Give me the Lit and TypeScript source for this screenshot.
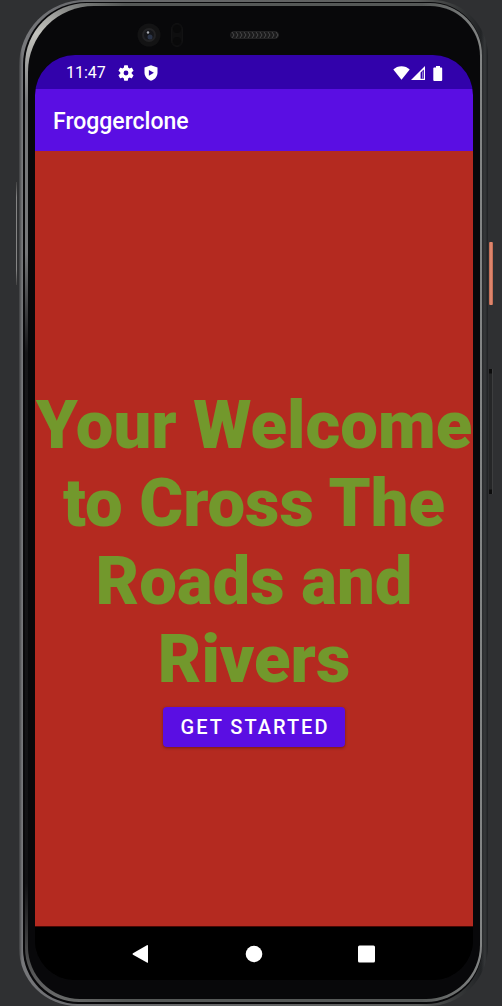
import { LitElement, html, css, svg } from "lit";
import { customElement } from "lit/decorators.js";

@customElement("status-bar")
class StatusBar extends LitElement {
  static styles = css`
    :host {
      display: flex;
      align-items: center;
      height: 34px;
      padding: 2px 30px 0 31px;
      box-sizing: border-box;
      background: #3202ab;
      color: #fff;
      font: 400 16px/20px Roboto, sans-serif;
    }
    .time { margin-right: 12px; }
    .gear { width: 16px; height: 16px; margin-right: 9px; }
    .shield { width: 16px; height: 16px; }
    .radios { display: flex; align-items: center; margin-left: auto; }
    .wifi { width: 17px; height: 14px; margin-right: 1px; }
    .cell { width: 15px; height: 14px; margin-right: 7px; }
    .battery { width: 10px; height: 15px; }
    svg { display: block; }
  `;

  render() {
    return html`
      <span class="time">11:47</span>
      <svg class="gear" viewBox="1 2 20 20" fill="#fff">
        <path d="M19.14 12.94c.04-.3.06-.61.06-.94s-.02-.64-.07-.94l2.03-1.58a.49.49 0 0 0 .12-.61l-1.92-3.32a.49.49 0 0 0-.59-.22l-2.39.96a7 7 0 0 0-1.62-.94l-.36-2.54a.48.48 0 0 0-.48-.41h-3.84a.48.48 0 0 0-.47.41l-.36 2.54a7.4 7.4 0 0 0-1.62.94l-2.39-.96a.48.48 0 0 0-.59.22L2.74 8.87a.47.47 0 0 0 .12.61l2.03 1.58a6 6 0 0 0-.02 1.88l-2.03 1.58a.49.49 0 0 0-.12.61l1.92 3.32c.12.22.37.29.59.22l2.39-.96c.5.38 1.03.7 1.62.94l.36 2.54c.05.24.24.41.48.41h3.84c.24 0 .44-.17.47-.41l.36-2.54a7 7 0 0 0 1.62-.94l2.39.96c.22.08.47 0 .59-.22l1.92-3.32a.47.47 0 0 0-.12-.61zM12 15a3 3 0 1 1 0-6 3 3 0 0 1 0 6z" transform="translate(-1 0)"/>
      </svg>
      <svg class="shield" viewBox="0 0 16 16">
        <path d="M8 .2 14.500 2.600V7.500c0 4-2.700 7-6.500 8.300C4.200 14.500 1.500 11.500 1.500 7.500V2.600z" fill="#fff"/>
        <path d="M5.900 4.900v5.800L10.900 7.800z" fill="#3202ab"/>
      </svg>
      <span class="radios">
        <svg class="wifi" viewBox="0 0 17 14"><path d="M8.500 13.800.300 3.600C2.500 1.500 5.300.300 8.500.300s6 1.200 8.200 3.300z" fill="#fff"/></svg>
        <svg class="cell" viewBox="0 0 15 14">
          <path d="M14 0v14H0z" fill="#fff"/>
          <path d="M12.800 3.600V12.800H9.600V6.600z" fill="#3202ab"/>
          <path d="M11 5.500h1V12.800h-1z" fill="#8f78d4"/>
        </svg>
        <svg class="battery" viewBox="0 0 10 15"><path d="M3 0h4v1.500h1.300q.9 0 .9.900v11.700q0 .9-.9.900H1.200q-.9 0-.9-.9V2.400q0-.9.900-.9H3z" fill="#fff"/></svg>
      </span>
    `;
  }
}

@customElement("navigation-bar")
class NavigationBar extends LitElement {
  static styles = css`
    :host {
      display: flex;
      align-items: center;
      justify-content: center;
      gap: 73px;
      height: 54px;
      background: #000;
      border-top: 1px solid #470804;
      box-sizing: border-box;
    }
    .key { width: 40px; height: 40px; padding: 0; border: 0; background: none; display: grid; place-items: center; }
    svg { display: block; width: 20px; height: 20px; fill: #fff; }
  `;

  render() {
    return html`
      <button class="key" aria-label="Back">
        <svg viewBox="0 0 20 20"><path d="M17 1.900v16q0 1.300-1.100.700L2 10.700q-1.100-.700 0-1.400L15.900 1.200q1.100-.600 1.100.700z"/></svg>
      </button>
      <button class="key" aria-label="Home">
        <svg viewBox="0 0 20 20"><circle cx="10" cy="10" r="8.300"/></svg>
      </button>
      <button class="key" aria-label="Recent apps">
        <svg viewBox="0 0 20 20"><rect x="1" y="1.500" width="17" height="17" rx="1.500"/></svg>
      </button>
    `;
  }
}

@customElement("app-root")
class AppRoot extends LitElement {
  static styles = css`
    :host {
      display: block;
      min-height: 100vh;
      background: #2f3032;
      font-family: Roboto, sans-serif;
    }
    .stage { padding: 0 14px 0 19px; }
    .rim, .groove, .bevel, .glass, .screen { display: flex; flex-direction: column; box-sizing: border-box; }
    .rim {
      position: relative;
      min-height: 100vh;
      padding: 2px 6px 2px 4px;
      border-radius: 66px 56px 60px 58px;
      background: linear-gradient(90deg, #3c3d3f 0, #77787b 3px, #6c6d70 40px, #5a5c5b calc(100% - 70px), #222426 calc(100% - 7px), #36383a calc(100% - 3px), #1e2022 100%);
    }
    .groove {
      flex: 1;
      padding: 1px 0 2px 2px;
      border-radius: 63px 52px 56px 55px;
      background: #08080a;
    }
    .bevel {
      flex: 1;
      padding: 3px 2px 3px 3px;
      border-radius: 62px 52px 56px 54px;
      background:
        linear-gradient(90deg, transparent 0, transparent 25px, #555857 100px, #555857 calc(100% - 60px), #838585 100%),
        linear-gradient(180deg, #8d8e8c 0, #c2c2bd 30px, #77787a 100px, #77787a 250px, #161618 350px, #111113 880px, #6d6e6e 100%);
    }
    .glass {
      flex: 1;
      padding: 0 7px 19px 7px;
      border-radius: 66px 50px 54px 52px;
      background: #08080a;
    }
    .sensors {
      display: flex;
      align-items: center;
      height: 49px;
      padding-left: 102px;
      padding-top: 8px;
      box-sizing: border-box;
    }
    .camera { width: 24px; height: 24px; margin-right: 10px; }
    .proximity { width: 12px; height: 24px; margin-right: 47px; }
    .speaker { width: 49px; height: 8px; }
    .screen {
      flex: 1;
      overflow: hidden;
      border-radius: 40px;
      background: #000;
    }
    .appbar {
      display: flex;
      align-items: center;
      height: 62px;
      padding: 4px 18px 0;
      box-sizing: border-box;
      background: #5a0ee3;
      color: #fff;
    }
    .title { margin: 0; font: 500 23px/28px Roboto, sans-serif; }
    .content {
      flex: 1;
      display: flex;
      flex-direction: column;
      align-items: center;
      justify-content: center;
      gap: 9px;
      padding-top: 55px;
      background: #b42a20;
    }
    .welcome {
      margin: 0;
      color: #72982c;
      text-align: center;
      font: 900 67px/78px Roboto, sans-serif;
    }
    .start {
      height: 40px;
      padding: 0 16px 0 18px;
      border: 0;
      border-radius: 4px;
      background: #5a0ee3;
      color: #fff;
      font: 500 20px/24px Roboto, sans-serif;
      letter-spacing: 2px;
      box-shadow: 0 1px 3px rgba(0, 0, 0, 0.35);
    }
    .side { position: absolute; }
    .power {
      top: 242px; right: -5px; width: 4px; height: 63px;
      border-radius: 1px;
      background: linear-gradient(90deg, #b5634c, #ec9076 50%, #b5634c);
    }
    .volume {
      top: 369px; right: -5px; width: 4px; height: 125px;
      background: linear-gradient(#0c0c0c 0 4px, #252627 5px calc(100% - 5px), #0c0c0c calc(100% - 4px));
      border-right: 1px solid #3d3e3f;
      box-sizing: border-box;
    }
    .ridge { top: 182px; left: -3px; width: 1px; height: 103px; background: linear-gradient(#444, #858585 15%, #858585 85%, #444); }
  `;

  render() {
    const holes = Array.from({ length: 12 }, (_, i) => svg`<path d=${`M${2 + i * 4} 1l2 3-2 3`} fill="none" stroke="#49494a"/>`);
    return html`
      <div class="stage">
        <div class="rim">
          <span class="side power"></span>
          <span class="side volume"></span>
          <span class="side ridge"></span>
          <div class="groove"><div class="bevel"><div class="glass">
            <div class="sensors">
              <svg class="camera" viewBox="0 0 24 24">
                <circle cx="12" cy="12" r="11.500" fill="#131314"/>
                <circle cx="12" cy="12" r="7" fill="#222224"/>
                <circle cx="12" cy="12" r="5" fill="#15161a"/>
                <circle cx="13" cy="14" r="2.500" fill="#2a3348"/>
                <circle cx="11" cy="9.500" r="1.200" fill="#a9abb2"/>
              </svg>
              <svg class="proximity" viewBox="0 0 12 24">
                <rect x=".5" y=".5" width="11" height="23" rx="5.500" fill="#0e0e0f" stroke="#121213"/>
                <circle cx="6" cy="6" r="4" fill="#09090a"/>
                <circle cx="6" cy="18" r="4" fill="#09090a"/>
              </svg>
              <svg class="speaker" viewBox="0 0 49 8">
                <rect x=".5" y=".5" width="48" height="7" rx="3.500" fill="#1a1a1b" stroke="#232324"/>
                ${holes}
              </svg>
            </div>
            <div class="screen">
              <status-bar></status-bar>
              <header class="appbar"><h1 class="title">Froggerclone</h1></header>
              <main class="content">
                <h2 class="welcome">Your Welcome to Cross The Roads and Rivers</h2>
                <button class="start">GET STARTED</button>
              </main>
              <navigation-bar></navigation-bar>
            </div>
          </div></div></div>
        </div>
      </div>
    `;
  }
}
